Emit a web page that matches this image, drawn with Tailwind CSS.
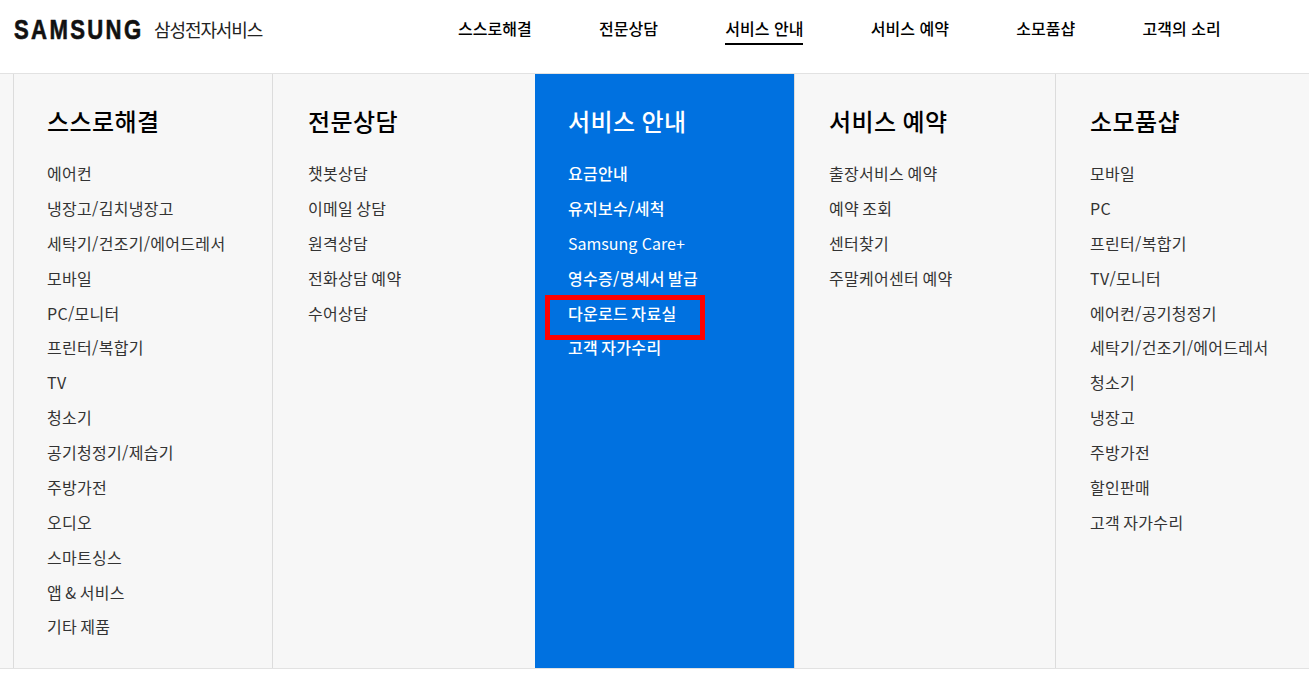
<!DOCTYPE html>
<html lang="ko">
  <head>
    <meta charset="UTF-8" />
    <title>삼성전자서비스</title>
    <script src="https://cdn.jsdelivr.net/npm/@tailwindcss/browser@4"></script>
  </head>
  <body class="bg-white font-['Noto_Sans_CJK_KR','Noto_Sans',sans-serif] text-black overflow-hidden">
    <header class="h-[73px] flex items-start">
      <div class="w-[458px] h-[58px] pl-[14px] flex items-center shrink-0">
        <svg class="w-[127px] h-[22px] shrink-0 overflow-visible" viewBox="0 0 127 22">
          <text transform="scale(0.82 1)" x="0" y="21" textLength="155" lengthAdjust="spacing" font-family="Liberation Sans" font-weight="700" font-size="27" fill="#111" stroke="#111" stroke-width="0.6">SAMSUNG</text>
        </svg>
        <span class="ml-[13px] text-[18px] leading-none tracking-[-1.1px] text-[#222]">삼성전자서비스</span>
      </div>
      <nav class="mt-[14px] flex gap-[67.4px] text-[16px] leading-[29px] font-medium">
        <a class="block">스스로해결</a>
        <a class="block">전문상담</a>
        <a class="block border-b-2 border-black">서비스 안내</a>
        <a class="block">서비스 예약</a>
        <a class="block">소모품샵</a>
        <a class="block">고객의 소리</a>
      </nav>
    </header>

    <main class="h-[596px] flex bg-[#f7f7f7] border-y border-[#e2e2e2]">
      <div class="w-[14px] border-r border-[#dcdcdc]"></div>

      <section class="w-[259px] border-r border-[#dcdcdc] pl-[33px] pt-[27px]">
        <h2 class="text-[24px] leading-[40px] tracking-[0.4px] [word-spacing:-1px] font-medium">스스로해결</h2>
        <ul class="mt-[15px] text-[16px] leading-[34.88px] text-[#333] tracking-[0.3px] [word-spacing:-1.5px]">
          <li>에어컨</li>
          <li>냉장고/김치냉장고</li>
          <li>세탁기/건조기/에어드레서</li>
          <li>모바일</li>
          <li>PC/모니터</li>
          <li>프린터/복합기</li>
          <li>TV</li>
          <li>청소기</li>
          <li>공기청정기/제습기</li>
          <li>주방가전</li>
          <li>오디오</li>
          <li>스마트싱스</li>
          <li>앱 &amp; 서비스</li>
          <li>기타 제품</li>
        </ul>
      </section>

      <section class="w-[262px] pl-[35px] pt-[27px]">
        <h2 class="text-[24px] leading-[40px] tracking-[0.4px] [word-spacing:-1px] font-medium">전문상담</h2>
        <ul class="mt-[15px] text-[16px] leading-[34.88px] text-[#333] tracking-[0.3px] [word-spacing:-1.5px]">
          <li>챗봇상담</li>
          <li>이메일 상담</li>
          <li>원격상담</li>
          <li>전화상담 예약</li>
          <li>수어상담</li>
        </ul>
      </section>

      <section class="w-[259px] bg-[#0071e0] text-white pl-[33px] pt-[27px]">
        <h2 class="text-[24px] leading-[40px] tracking-[0.4px] [word-spacing:-1px] font-medium">서비스 안내</h2>
        <ul class="mt-[15px] text-[16px] leading-[34.88px] font-medium tracking-[0.3px] [word-spacing:-1.5px]">
          <li>요금안내</li>
          <li>유지보수/세척</li>
          <li class="font-normal tracking-normal [word-spacing:0]">Samsung Care+</li>
          <li>영수증/명세서 발급</li>
          <li class="relative">
            다운로드 자료실
            <span class="absolute left-[-23px] top-[-1px] w-[160px] h-[45px] border-[5px] border-[#ff0000]"></span>
          </li>
          <li>고객 자가수리</li>
        </ul>
      </section>

      <section class="w-[262px] border-x border-[#dcdcdc] pl-[34px] pt-[27px]">
        <h2 class="text-[24px] leading-[40px] tracking-[0.4px] [word-spacing:-1px] font-medium">서비스 예약</h2>
        <ul class="mt-[15px] text-[16px] leading-[34.88px] text-[#333] tracking-[0.3px] [word-spacing:-1.5px]">
          <li>출장서비스 예약</li>
          <li>예약 조회</li>
          <li>센터찾기</li>
          <li>주말케어센터 예약</li>
        </ul>
      </section>

      <section class="flex-1 pl-[34px] pt-[27px]">
        <h2 class="text-[24px] leading-[40px] tracking-[0.4px] [word-spacing:-1px] font-medium">소모품샵</h2>
        <ul class="mt-[15px] text-[16px] leading-[34.88px] text-[#333] tracking-[0.3px] [word-spacing:-1.5px]">
          <li>모바일</li>
          <li>PC</li>
          <li>프린터/복합기</li>
          <li>TV/모니터</li>
          <li>에어컨/공기청정기</li>
          <li>세탁기/건조기/에어드레서</li>
          <li>청소기</li>
          <li>냉장고</li>
          <li>주방가전</li>
          <li>할인판매</li>
          <li>고객 자가수리</li>
        </ul>
      </section>
    </main>
  </body>
</html>
